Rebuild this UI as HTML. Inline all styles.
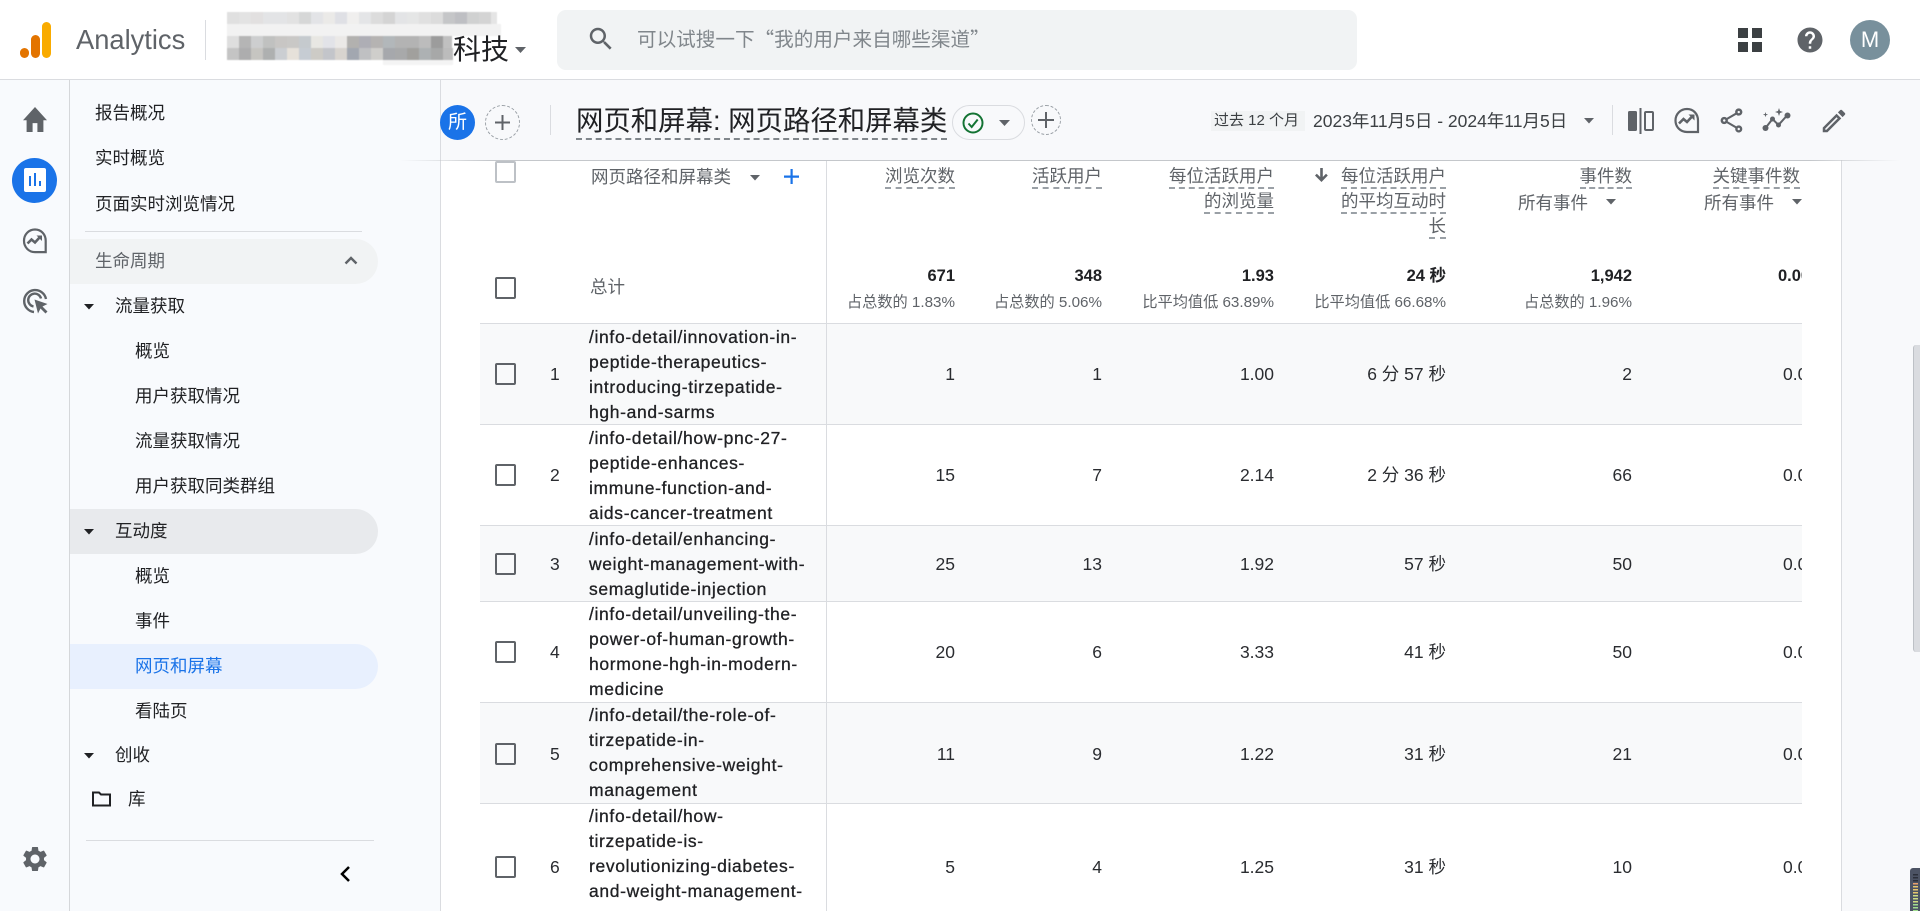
<!DOCTYPE html>
<html lang="zh-CN">
<head>
<meta charset="utf-8">
<title>Analytics</title>
<style>
html,body{margin:0;padding:0;width:1920px;height:911px;overflow:hidden;background:#fff;font-family:"Liberation Sans","Noto Sans CJK SC",sans-serif;color:#202124}
div,span,svg{position:absolute;box-sizing:border-box}
.t{white-space:nowrap;line-height:26px;height:26px;font-size:17.5px}
.r{text-align:right}
.n{font-size:17.5px;color:#2a2c30}
.g{color:#5f6368}
.d{border-bottom:2px dashed #9aa0a6;line-height:24px;height:25px;color:#5f6368;font-size:17.5px;white-space:nowrap;text-align:right}
.sub{font-size:15.2px;color:#5f6368;white-space:nowrap;text-align:right;line-height:18px;height:18px}
.tot{font-size:16.5px;font-weight:bold;color:#202124;white-space:nowrap;text-align:right;line-height:20px;height:20px}
.cb{left:495px;width:21px;height:22px;border:2px solid #5f6368;border-radius:2px}
.row{left:480px;width:1322px;border-bottom:1px solid #dadce0}
.path{left:589px;font-size:17.5px;letter-spacing:.65px;line-height:25px;color:#202124;white-space:nowrap;-webkit-text-stroke:.3px #202124}
.line{height:1px;background:#dadce0}
.i{fill:#5f6368}
</style>
</head>
<body>

<!-- top bar -->
<div style="left:0;top:0;width:1920px;height:80px;background:#fff;border-bottom:1px solid #dadce0"></div>
<div style="left:20px;top:48px;width:9px;height:10px;border-radius:5px;background:#e37400"></div>
<div style="left:31px;top:35px;width:9px;height:23px;border-radius:4.5px;background:#e37400"></div>
<div style="left:42px;top:22px;width:9px;height:36px;border-radius:4.5px;background:#f9ab00"></div>
<div class="t" style="left:76px;top:22px;font-size:27.3px;line-height:36px;height:36px;color:#5f6368">Analytics</div>
<div style="left:205px;top:20px;width:1px;height:40px;background:#dadce0"></div>

<svg style="left:227px;top:12px;filter:blur(.6px)" width="274" height="54" shape-rendering="crispEdges">
<rect x="0" y="12" width="274" height="12" fill="#f2f2f2"/>
<g>
<rect x="0" y="0" width="12" height="12" fill="#e0e0e0"/><rect x="12" y="0" width="12" height="12" fill="#e3e3e3"/><rect x="24" y="0" width="12" height="12" fill="#e2e0e0"/><rect x="36" y="0" width="12" height="12" fill="#e3e4e6"/><rect x="48" y="0" width="12" height="12" fill="#e3e4e6"/><rect x="60" y="0" width="12" height="12" fill="#e2e2e2"/><rect x="72" y="0" width="12" height="12" fill="#d6d7d7"/><rect x="84" y="0" width="12" height="12" fill="#e3e4e7"/><rect x="96" y="0" width="12" height="12" fill="#ebeae8"/><rect x="108" y="0" width="12" height="12" fill="#dfe0e5"/><rect x="120" y="0" width="12" height="12" fill="#f0efee"/><rect x="132" y="0" width="12" height="12" fill="#e4e5e7"/><rect x="144" y="0" width="12" height="12" fill="#dcdcdc"/><rect x="156" y="0" width="12" height="12" fill="#d4d4d4"/><rect x="168" y="0" width="12" height="12" fill="#e3e4e6"/><rect x="180" y="0" width="12" height="12" fill="#e5e6e6"/><rect x="192" y="0" width="12" height="12" fill="#e0e0e0"/><rect x="204" y="0" width="12" height="12" fill="#dcdcdc"/><rect x="216" y="0" width="12" height="12" fill="#c5c6c8"/><rect x="228" y="0" width="12" height="12" fill="#bebfc3"/><rect x="240" y="0" width="12" height="12" fill="#d0d1d1"/><rect x="252" y="0" width="12" height="12" fill="#d4d4d4"/><rect x="264" y="0" width="6" height="12" fill="#e5e5e5"/>
</g>
<g>
<rect x="0" y="24" width="12" height="12" fill="#dedede"/><rect x="12" y="24" width="12" height="12" fill="#b5b5b5"/><rect x="24" y="24" width="12" height="12" fill="#cdcecf"/><rect x="36" y="24" width="12" height="12" fill="#c0c1c0"/><rect x="48" y="24" width="12" height="12" fill="#c8c6c4"/><rect x="60" y="24" width="12" height="12" fill="#c9c8c6"/><rect x="72" y="24" width="12" height="12" fill="#c5cace"/><rect x="84" y="24" width="12" height="12" fill="#e8e7e3"/><rect x="96" y="24" width="12" height="12" fill="#e2e3e8"/><rect x="108" y="24" width="12" height="12" fill="#ebe9e7"/><rect x="120" y="24" width="12" height="12" fill="#b2b1af"/><rect x="132" y="24" width="12" height="12" fill="#aeaeb5"/><rect x="144" y="24" width="12" height="12" fill="#b5b3b2"/><rect x="156" y="24" width="12" height="12" fill="#b2b7ba"/><rect x="168" y="24" width="12" height="12" fill="#b3b3b3"/><rect x="180" y="24" width="12" height="12" fill="#b3b3b3"/><rect x="192" y="24" width="12" height="12" fill="#bcbcbc"/><rect x="204" y="24" width="12" height="12" fill="#9c9c9c"/><rect x="216" y="24" width="9" height="12" fill="#c0c0c0"/>
</g>
<g>
<rect x="0" y="36" width="12" height="12" fill="#c4c4c4"/><rect x="12" y="36" width="12" height="12" fill="#adadae"/><rect x="24" y="36" width="12" height="12" fill="#c6c5c1"/><rect x="36" y="36" width="12" height="12" fill="#aeb0b0"/><rect x="48" y="36" width="12" height="12" fill="#cbced2"/><rect x="60" y="36" width="12" height="12" fill="#e6e1da"/><rect x="72" y="36" width="12" height="12" fill="#c6ccd3"/><rect x="84" y="36" width="12" height="12" fill="#cdcbc6"/><rect x="96" y="36" width="12" height="12" fill="#c3c5ca"/><rect x="108" y="36" width="12" height="12" fill="#d8d4cf"/><rect x="120" y="36" width="12" height="12" fill="#a2a7b0"/><rect x="132" y="36" width="12" height="12" fill="#bfc0c2"/><rect x="144" y="36" width="12" height="12" fill="#cfcecb"/><rect x="156" y="36" width="12" height="12" fill="#a6a8ac"/><rect x="168" y="36" width="12" height="12" fill="#a8a9aa"/><rect x="180" y="36" width="12" height="12" fill="#a1a09d"/><rect x="192" y="36" width="12" height="12" fill="#adb1b3"/><rect x="204" y="36" width="12" height="12" fill="#a7a8a8"/><rect x="216" y="36" width="10" height="12" fill="#bcbcbc"/>
</g>
<rect x="156" y="48" width="70" height="5" fill="#f4f4f4"/>
</svg>

<div class="t" style="left:453px;top:33px;font-size:28px;line-height:34px;height:34px;color:#202124">科技</div>
<svg style="left:515px;top:47px" width="11" height="6"><path d="M0 0h11L5.500 6z" fill="#5f6368"/></svg>

<div style="left:557px;top:10px;width:800px;height:60px;border-radius:9px;background:#f1f3f4"></div>
<svg style="left:586px;top:24px" width="30" height="30" viewBox="0 0 24 24"><path class="i" d="M15.5 14h-.79l-.28-.27C15.41 12.59 16 11.11 16 9.5 16 5.91 13.09 3 9.5 3S3 5.91 3 9.5 5.91 16 9.5 16c1.61 0 3.09-.59 4.23-1.57l.27.28v.79l5 4.99L20.49 19l-4.99-5zm-6 0C7.01 14 5 11.99 5 9.5S7.01 5 9.5 5 14 7.01 14 9.5 11.99 14 9.5 14z"/></svg>
<div class="t" style="left:637px;top:25px;font-size:19.6px;line-height:26px;color:#80868b;font-family:'Noto Sans CJK SC',sans-serif">可以试搜一下“我的用户来自哪些渠道”</div>

<svg style="left:1738px;top:28px" width="24" height="24" shape-rendering="crispEdges"><path fill="#3c4043" d="M0 0h10v10H0zM14 0h10v10H14zM0 14h10v10H0zM14 14h10v10H14z"/></svg>
<svg style="left:1795px;top:25px" width="30" height="30" viewBox="0 0 24 24"><path class="i" d="M12 2C6.48 2 2 6.48 2 12s4.48 10 10 10 10-4.48 10-10S17.52 2 12 2zm1 17h-2v-2h2v2zm2.07-7.75l-.9.92C13.45 12.9 13 13.5 13 15h-2v-.5c0-1.1.45-2.1 1.17-2.83l1.24-1.26c.37-.36.59-.86.59-1.41 0-1.1-.9-2-2-2s-2 .9-2 2H8c0-2.21 1.79-4 4-4s4 1.79 4 4c0 .88-.36 1.68-.93 2.25z"/></svg>
<div style="left:1850px;top:20px;width:40px;height:40px;border-radius:50%;background:#78909c;color:#fff;font-size:22px;line-height:40px;text-align:center">M</div>

<!-- page background regions -->
<div style="left:0;top:80px;width:441px;height:831px;background:#f8fafd"></div>
<div style="left:69px;top:80px;width:1px;height:831px;background:#d5d7da"></div>
<div style="left:440px;top:80px;width:1px;height:831px;background:#dadce0"></div>
<div style="left:1841px;top:80px;width:79px;height:831px;background:#f8f9fb;border-left:1px solid #dadce0"></div>

<!-- rail icons -->
<svg style="left:23px;top:107px" width="24" height="25" viewBox="2 3 20 17" preserveAspectRatio="none"><path class="i" d="M10 20v-6h4v6h5v-8h3L12 3 2 12h3v8z"/></svg>
<div style="left:12px;top:158px;width:45px;height:45px;border-radius:50%;background:#1a73e8"></div>
<div style="left:24px;top:168px;width:22px;height:24px;border-radius:2px;background:#fff"></div>
<svg style="left:24px;top:168px" width="22" height="24" shape-rendering="crispEdges"><path fill="#1a73e8" d="M5 8h2v10H5zM10 5h2v13h-2zM15 13h2v5h-2z"/></svg>
<svg style="left:22px;top:227px" width="26" height="28" viewBox="0 0 26 28"><path d="M13 2.5C6.8 2.5 2 7.4 2 13.800s4.800 11.300 11 11.300h10.700V13.800C23.700 7.400 19.200 2.500 13 2.500z" fill="none" stroke="#5f6368" stroke-width="2.200"/><path d="M5.500 16.500l4-4 3.500 3 5-5.500" fill="none" stroke="#5f6368" stroke-width="2.600"/><path d="M14.500 8.500h5.500V14z" fill="#5f6368"/></svg>
<svg style="left:22px;top:287px" width="28" height="28" viewBox="0 0 28 28"><path d="M12 25A11 11 0 1 1 24 12" fill="none" stroke="#5f6368" stroke-width="2.400"/><path d="M11.500 19.500A6.500 6.500 0 1 1 19 11.500" fill="none" stroke="#5f6368" stroke-width="2.400"/><path d="M12.500 12.500l13 4.500-5 2.500 5 5-2 2-5-5-2.500 5z" fill="#5f6368"/></svg>
<svg style="left:20px;top:844px" width="30" height="30" viewBox="0 0 24 24"><path class="i" d="M19.140 12.940c.04-.3.06-.61.06-.94 0-.32-.02-.64-.07-.94l2.030-1.580c.18-.14.23-.41.12-.61l-1.920-3.320c-.12-.22-.37-.29-.59-.22l-2.390.96c-.5-.38-1.030-.7-1.620-.94l-.36-2.540c-.04-.24-.24-.41-.48-.41h-3.840c-.24 0-.43.17-.47.41l-.36 2.540c-.59.24-1.130.57-1.620.94l-2.390-.96c-.22-.08-.47 0-.59.22L2.740 8.870c-.12.21-.08.47.12.61l2.030 1.580c-.05.3-.09.63-.09.94s.02.64.07.94l-2.030 1.580c-.18.14-.23.41-.12.61l1.920 3.320c.12.22.37.29.59.22l2.390-.96c.5.38 1.030.7 1.620.94l.36 2.540c.05.24.24.41.48.41h3.840c.24 0 .44-.17.47-.41l.36-2.540c.59-.24 1.130-.56 1.620-.94l2.390.96c.22.08.47 0 .59-.22l1.920-3.320c.12-.22.07-.47-.12-.61l-2.010-1.580zM12 15.600c-1.980 0-3.600-1.620-3.600-3.600s1.620-3.600 3.600-3.600 3.600 1.620 3.600 3.600-1.620 3.600-3.600 3.600z"/></svg>

<!-- nav -->
<div class="t" style="left:95px;top:100px">报告概况</div>
<div class="t" style="left:95px;top:145px">实时概览</div>
<div class="t" style="left:95px;top:191px">页面实时浏览情况</div>
<div class="line" style="left:85px;top:231px;width:277px"></div>
<div style="left:70px;top:239px;width:308px;height:45px;background:#f1f3f4;border-radius:0 23px 23px 0"></div>
<div class="t g" style="left:95px;top:248px">生命周期</div>
<svg style="left:344px;top:255px" width="14" height="10"><path d="M1.500 8.500L7 3l5.500 5.500" fill="none" stroke="#5f6368" stroke-width="2.400"/></svg>

<svg style="left:84px;top:304px" width="10" height="6"><path d="M0 0h10L5 5.500z" fill="#202124"/></svg>
<div class="t" style="left:115px;top:293px">流量获取</div>
<div class="t" style="left:135px;top:338px">概览</div>
<div class="t" style="left:135px;top:383px">用户获取情况</div>
<div class="t" style="left:135px;top:428px">流量获取情况</div>
<div class="t" style="left:135px;top:473px">用户获取同类群组</div>
<div style="left:70px;top:509px;width:308px;height:45px;background:#e8eaed;border-radius:0 23px 23px 0"></div>
<svg style="left:84px;top:529px" width="10" height="6"><path d="M0 0h10L5 5.500z" fill="#202124"/></svg>
<div class="t" style="left:115px;top:518px">互动度</div>
<div class="t" style="left:135px;top:563px">概览</div>
<div class="t" style="left:135px;top:608px">事件</div>
<div style="left:70px;top:644px;width:308px;height:45px;background:#e8f0fe;border-radius:0 23px 23px 0"></div>
<div class="t" style="left:135px;top:653px;color:#1a73e8">网页和屏幕</div>
<div class="t" style="left:135px;top:698px">看陆页</div>
<svg style="left:84px;top:753px" width="10" height="6"><path d="M0 0h10L5 5.500z" fill="#202124"/></svg>
<div class="t" style="left:115px;top:742px">创收</div>
<svg style="left:92px;top:791px" width="19" height="16"><path d="M1 3V1.500h6l2 2h9v11H1z" fill="none" stroke="#202124" stroke-width="2"/></svg>
<div class="t" style="left:128px;top:786px">库</div>
<div class="line" style="left:86px;top:840px;width:288px"></div>
<svg style="left:339px;top:865px" width="12" height="18"><path d="M10 2L3 9l7 7" fill="none" stroke="#000" stroke-width="2.500"/></svg>

<!-- table -->
<div style="left:441px;top:160px;width:1400px;height:751px;background:#fff"></div>
<div class="row" style="top:323px;height:102px;background:#f8f9fa"></div>
<div class="row" style="top:425px;height:101px;background:#fff"></div>
<div class="row" style="top:526px;height:76px;background:#f8f9fa"></div>
<div class="row" style="top:602px;height:101px;background:#fff"></div>
<div class="row" style="top:703px;height:101px;background:#f8f9fa"></div>
<div class="row" style="top:804px;height:107px;background:#fff;border-bottom:0"></div>
<div class="line" style="left:480px;top:323px;width:1322px"></div>
<div style="left:826px;top:160px;width:1px;height:751px;background:#dadce0"></div>

<!-- table head -->
<div class="cb" style="top:161px;border-color:#bdc1c6"></div>
<div class="t g" style="left:591px;top:164px">网页路径和屏幕类</div>
<svg style="left:750px;top:175px" width="10" height="6"><path d="M0 0h10L5 5.500z" fill="#5f6368"/></svg>
<svg style="left:784px;top:169px" width="15" height="15"><path d="M6.500 0h2.200v6.500H15v2.200H8.700V15H6.500V8.700H0V6.500h6.500z" fill="#1a73e8"/></svg>

<div class="d" style="right:965px;top:164px">浏览次数</div>
<div class="d" style="right:818px;top:164px">活跃用户</div>
<div class="d" style="right:646px;top:164px">每位活跃用户</div>
<div class="d" style="right:646px;top:189px">的浏览量</div>
<svg style="left:1315px;top:168px" width="13" height="15"><path d="M5.200 0h2.600v9l3.200-3.200 1.800 1.700L6.500 14 0 7.500l1.800-1.700L5.200 9z" fill="#5f6368"/></svg>
<div class="d" style="right:474px;top:164px">每位活跃用户</div>
<div class="d" style="right:474px;top:189px">的平均互动时</div>
<div class="d" style="right:474px;top:214px">长</div>
<div class="d" style="right:288px;top:164px">事件数</div>
<div class="t g" style="left:1518px;top:190px">所有事件</div>
<svg style="left:1606px;top:199px" width="10" height="6"><path d="M0 0h10L5 5.500z" fill="#5f6368"/></svg>
<div class="d" style="right:120px;top:164px">关键事件数</div>
<div class="t g" style="left:1704px;top:190px">所有事件</div>
<svg style="left:1792px;top:199px" width="10" height="6"><path d="M0 0h10L5 5.500z" fill="#5f6368"/></svg>

<!-- totals -->
<div class="cb" style="top:277px"></div>
<div class="t g" style="left:590px;top:274px">总计</div>
<div class="tot" style="right:965px;top:266px">671</div>
<div class="sub" style="right:965px;top:294px">占总数的 1.83%</div>
<div class="tot" style="right:818px;top:266px">348</div>
<div class="sub" style="right:818px;top:294px">占总数的 5.06%</div>
<div class="tot" style="right:646px;top:266px">1.93</div>
<div class="sub" style="right:646px;top:294px">比平均值低 63.89%</div>
<div class="tot" style="right:474px;top:266px">24 秒</div>
<div class="sub" style="right:474px;top:294px">比平均值低 66.68%</div>
<div class="tot" style="right:288px;top:266px">1,942</div>
<div class="sub" style="right:288px;top:294px">占总数的 1.96%</div>
<div class="tot" style="left:1778px;top:266px;width:24px;text-align:left;overflow:hidden">0.00</div>

<!-- row 1 -->
<div class="cb" style="top:363px"></div>
<div class="t n" style="left:550px;top:361px">1</div>
<div class="path" style="top:325px">/info-detail/innovation-in-<br>peptide-therapeutics-<br>introducing-tirzepatide-<br>hgh-and-sarms</div>
<div class="t n r" style="right:965px;top:361px">1</div>
<div class="t n r" style="right:818px;top:361px">1</div>
<div class="t n r" style="right:646px;top:361px">1.00</div>
<div class="t n r" style="right:474px;top:361px">6 分 57 秒</div>
<div class="t n r" style="right:288px;top:361px">2</div>
<div class="t n" style="left:1783px;top:361px;width:19px;overflow:hidden">0.00</div>

<!-- row 2 -->
<div class="cb" style="top:464px"></div>
<div class="t n" style="left:550px;top:462px">2</div>
<div class="path" style="top:426px">/info-detail/how-pnc-27-<br>peptide-enhances-<br>immune-function-and-<br>aids-cancer-treatment</div>
<div class="t n r" style="right:965px;top:462px">15</div>
<div class="t n r" style="right:818px;top:462px">7</div>
<div class="t n r" style="right:646px;top:462px">2.14</div>
<div class="t n r" style="right:474px;top:462px">2 分 36 秒</div>
<div class="t n r" style="right:288px;top:462px">66</div>
<div class="t n" style="left:1783px;top:462px;width:19px;overflow:hidden">0.00</div>

<!-- row 3 -->
<div class="cb" style="top:553px"></div>
<div class="t n" style="left:550px;top:551px">3</div>
<div class="path" style="top:527px">/info-detail/enhancing-<br>weight-management-with-<br>semaglutide-injection</div>
<div class="t n r" style="right:965px;top:551px">25</div>
<div class="t n r" style="right:818px;top:551px">13</div>
<div class="t n r" style="right:646px;top:551px">1.92</div>
<div class="t n r" style="right:474px;top:551px">57 秒</div>
<div class="t n r" style="right:288px;top:551px">50</div>
<div class="t n" style="left:1783px;top:551px;width:19px;overflow:hidden">0.00</div>

<!-- row 4 -->
<div class="cb" style="top:641px"></div>
<div class="t n" style="left:550px;top:639px">4</div>
<div class="path" style="top:602px">/info-detail/unveiling-the-<br>power-of-human-growth-<br>hormone-hgh-in-modern-<br>medicine</div>
<div class="t n r" style="right:965px;top:639px">20</div>
<div class="t n r" style="right:818px;top:639px">6</div>
<div class="t n r" style="right:646px;top:639px">3.33</div>
<div class="t n r" style="right:474px;top:639px">41 秒</div>
<div class="t n r" style="right:288px;top:639px">50</div>
<div class="t n" style="left:1783px;top:639px;width:19px;overflow:hidden">0.00</div>

<!-- row 5 -->
<div class="cb" style="top:743px"></div>
<div class="t n" style="left:550px;top:741px">5</div>
<div class="path" style="top:703px">/info-detail/the-role-of-<br>tirzepatide-in-<br>comprehensive-weight-<br>management</div>
<div class="t n r" style="right:965px;top:741px">11</div>
<div class="t n r" style="right:818px;top:741px">9</div>
<div class="t n r" style="right:646px;top:741px">1.22</div>
<div class="t n r" style="right:474px;top:741px">31 秒</div>
<div class="t n r" style="right:288px;top:741px">21</div>
<div class="t n" style="left:1783px;top:741px;width:19px;overflow:hidden">0.00</div>

<!-- row 6 -->
<div class="cb" style="top:856px"></div>
<div class="t n" style="left:550px;top:854px">6</div>
<div class="path" style="top:804px">/info-detail/how-<br>tirzepatide-is-<br>revolutionizing-diabetes-<br>and-weight-management-</div>
<div class="t n r" style="right:965px;top:854px">5</div>
<div class="t n r" style="right:818px;top:854px">4</div>
<div class="t n r" style="right:646px;top:854px">1.25</div>
<div class="t n r" style="right:474px;top:854px">31 秒</div>
<div class="t n r" style="right:288px;top:854px">10</div>
<div class="t n" style="left:1783px;top:854px;width:19px;overflow:hidden">0.00</div>

<!-- sub header -->
<div style="left:441px;top:80px;width:1479px;height:80px;background:#f8f9fb"></div>
<div style="left:400px;top:160px;width:1500px;height:1px;background:linear-gradient(90deg,rgba(190,193,198,0),#c4c7cb 6%,#c4c7cb 94%,rgba(190,193,198,0))"></div>

<div style="left:440px;top:105px;width:35px;height:35px;border-radius:50%;background:#1a73e8;color:#fff;font-size:19px;line-height:35px;text-align:center">所</div>
<div style="left:485px;top:105px;width:35px;height:35px;border-radius:50%;border:1px dashed #9aa0a6"></div>
<svg style="left:495px;top:115px" width="15" height="15"><path d="M6.500 0h2v6.500H15v2H8.500V15h-2V8.500H0v-2h6.500z" fill="#5f6368"/></svg>
<div style="left:550px;top:105px;width:1px;height:30px;background:#dadce0"></div>
<div class="t" style="left:576px;top:102px;font-size:27.4px;line-height:38px;height:38px;border-bottom:2px dashed #80868b;color:#202124">网页和屏幕: 网页路径和屏幕类</div>
<div style="left:952px;top:105px;width:73px;height:35px;border-radius:18px;border:1px solid #dadce0"></div>
<svg style="left:962px;top:111px" width="22" height="24"><circle cx="11" cy="12" r="9.500" fill="none" stroke="#137333" stroke-width="2"/><path d="M6.500 12.500l3.200 3.500 6-7.500" fill="none" stroke="#137333" stroke-width="2"/></svg>
<svg style="left:999px;top:120px" width="11" height="6"><path d="M0 0h11L5.500 6z" fill="#5f6368"/></svg>
<div style="left:1031px;top:105px;width:30px;height:30px;border-radius:50%;border:1px dashed #9aa0a6"></div>
<svg style="left:1038px;top:112px" width="16" height="16"><path d="M7 0h2v7h7v2H9v7H7V9H0V7h7z" fill="#5f6368"/></svg>

<div style="left:1211px;top:111px;width:94px;height:20px;background:#f1f3f4"></div>
<div class="t" style="left:1214px;top:108px;font-size:15px;color:#3c4043">过去 12 个月</div>
<div class="t" style="left:1313px;top:108px;font-size:17.500px;color:#3c4043">2023年11月5日 - 2024年11月5日</div>
<svg style="left:1584px;top:118px" width="10" height="6"><path d="M0 0h10L5 5.500z" fill="#5f6368"/></svg>
<div style="left:1612px;top:105px;width:1px;height:30px;background:#dadce0"></div>

<svg style="left:1628px;top:108px" width="26" height="26"><rect x="0" y="3" width="9" height="20" rx="1.500" fill="#5f6368"/><rect x="11.500" y="0" width="2" height="26" fill="#5f6368"/><rect x="17" y="4" width="8" height="18" rx="1" fill="none" stroke="#5f6368" stroke-width="2"/></svg>
<svg style="left:1673px;top:107px" width="28" height="27" viewBox="0 0 28 27"><path d="M14 2C7.500 2 2.500 7 2.500 13.500S7.500 25 14 25h11V13.500C25 7 20.500 2 14 2z" fill="none" stroke="#5f6368" stroke-width="2.200"/><path d="M6 16.500l4.500-4.500 3.500 3 5.500-6" fill="none" stroke="#5f6368" stroke-width="2.600"/><path d="M15.500 7.500h6V13.500z" fill="#5f6368"/></svg>
<svg style="left:1717px;top:106px" width="29" height="29" viewBox="0 0 24 24"><path class="i" d="M18 16.080c-.76 0-1.440.3-1.960.77L8.910 12.700c.05-.23.09-.46.09-.7s-.04-.47-.09-.7l7.050-4.110c.54.5 1.250.81 2.040.81 1.660 0 3-1.340 3-3s-1.340-3-3-3-3 1.340-3 3c0 .24.04.47.09.7L8.040 9.810C7.500 9.310 6.790 9 6 9c-1.660 0-3 1.340-3 3s1.340 3 3 3c.79 0 1.500-.31 2.040-.81l7.120 4.160c-.05.21-.08.43-.08.65 0 1.610 1.310 2.920 2.920 2.920s2.920-1.310 2.920-2.920-1.310-2.920-2.920-2.920zM18 4c.55 0 1 .45 1 1s-.45 1-1 1-1-.45-1-1 .45-1 1-1zM6 13c-.55 0-1-.45-1-1s.45-1 1-1 1 .45 1 1-.45 1-1 1zm12 7.020c-.55 0-1-.45-1-1s.45-1 1-1 1 .45 1 1-.45 1-1 1z"/></svg>
<svg style="left:1762px;top:108px" width="29" height="24" viewBox="0 0 29 24"><path d="M3.500 20l7-9 6 6 8.500-9.500" fill="none" stroke="#5f6368" stroke-width="2"/><circle cx="3.500" cy="20" r="3" fill="#5f6368"/><circle cx="10.500" cy="11" r="2.500" fill="#5f6368"/><circle cx="16.500" cy="17" r="2.500" fill="#5f6368"/><circle cx="25.500" cy="7.500" r="3" fill="#5f6368"/><path d="M17 0l1 3 3 1-3 1-1 3-1-3-3-1 3-1zM3.500 4l.6 2 2 .6-2 .6-.6 2-.6-2-2-.6 2-.6z" fill="#5f6368"/></svg>
<svg style="left:1819px;top:106px" width="30" height="30" viewBox="0 0 24 24"><path class="i" d="M3 17.250V21h3.750L17.810 9.940l-3.750-3.750L3 17.250zM5.920 19H5v-.92l9.060-9.060.92.92L5.920 19zM20.710 7.040c.39-.39.39-1.020 0-1.410l-2.340-2.340c-.2-.2-.45-.29-.71-.29s-.51.1-.7.29l-1.830 1.830 3.750 3.750 1.830-1.830z"/></svg>

<!-- scrollbar and corner widget -->
<div style="left:1913px;top:345px;width:7px;height:307px;background:#dadce0;border-left:1px solid #bdc1c6;border-radius:3px 0 0 3px"></div>
<div style="left:1910px;top:868px;width:10px;height:43px;background:#4c5364;border-radius:3px 0 0 0"></div>
<svg style="left:1913px;top:874px" width="7" height="37" shape-rendering="crispEdges"><path fill="#2b2f3a" d="M0 0h5v1.500H0zM0 3h5v1.500H0zM0 6h5v1.500H0z"/><path fill="#e8a06a" d="M0 9h5v1.500H0z"/><path fill="#e6c66d" d="M0 12h5v1.500H0zM0 15h5v1.500H0zM0 18h5v1.500H0z"/><path fill="#cfdc82" d="M0 21h5v1.500H0zM0 24h5v1.500H0zM0 27h5v1.500H0z"/><path fill="#9fdc8e" d="M0 30h5v1.500H0zM0 33h5v1.500H0zM0 36h5v1H0z"/></svg>

</body>
</html>
